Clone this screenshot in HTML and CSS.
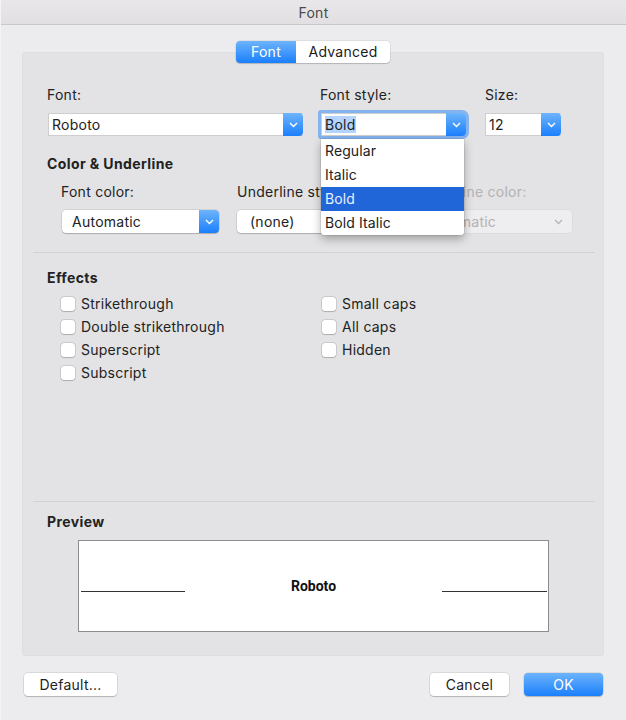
FILE: index.html
```html
<!DOCTYPE html>
<html lang="en">
<head>
  <meta charset="UTF-8" />
  <meta name="viewport" content="width=device-width, initial-scale=1.0"/>
  <title>Font</title>
  <link rel="stylesheet" href="styles.css">
</head>
<body>
  <div class="window">
    <header class="titlebar">Font</header>

    <section class="panel">
      <div class="tabs">
        <span class="tab active">Font</span>
        <span class="tab">Advanced</span>
      </div>

      <div class="font-row">
        <div class="field">
          <label>Font:</label>
          <div class="combo combo-font">
            <span class="combo-text">Roboto</span>
            <span class="arrow-btn"><svg width="9" height="6" viewBox="0 0 9 6"><path d="M1 1l3.5 3.5L8 1" fill="none" stroke="#fff" stroke-width="1.4"/></svg></span>
          </div>
        </div>

        <div class="field">
          <label>Font style:</label>
          <div class="combo combo-style focused">
            <span class="combo-text"><span class="selected-text">Bold</span></span>
            <span class="arrow-btn"><svg width="9" height="6" viewBox="0 0 9 6"><path d="M1 1l3.5 3.5L8 1" fill="none" stroke="#fff" stroke-width="1.4"/></svg></span>
            <ul class="menu">
              <li>Regular</li>
              <li>Italic</li>
              <li class="highlight">Bold</li>
              <li>Bold Italic</li>
            </ul>
          </div>
        </div>

        <div class="field">
          <label>Size:</label>
          <div class="combo combo-size">
            <span class="combo-text">12</span>
            <span class="arrow-btn"><svg width="9" height="6" viewBox="0 0 9 6"><path d="M1 1l3.5 3.5L8 1" fill="none" stroke="#fff" stroke-width="1.4"/></svg></span>
          </div>
        </div>
      </div>

      <h3 class="group-title">Color &amp; Underline</h3>
      <div class="color-row">
        <div class="field">
          <label>Font color:</label>
          <div class="popup popup-color">
            <span class="popup-text">Automatic</span>
            <span class="arrow-btn"><svg width="9" height="6" viewBox="0 0 9 6"><path d="M1 1l3.5 3.5L8 1" fill="none" stroke="#fff" stroke-width="1.4"/></svg></span>
          </div>
        </div>
        <div class="field">
          <label>Underline style:</label>
          <div class="popup popup-underline">
            <span class="popup-text">(none)</span>
            <span class="arrow-btn"><svg width="9" height="6" viewBox="0 0 9 6"><path d="M1 1l3.5 3.5L8 1" fill="none" stroke="#fff" stroke-width="1.4"/></svg></span>
          </div>
        </div>
        <div class="field disabled">
          <label>Underline color:</label>
          <div class="popup popup-disabled">
            <span class="popup-text">Automatic</span>
            <span class="arrow-plain"><svg width="9" height="6" viewBox="0 0 9 6"><path d="M1 1l3.5 3.5L8 1" fill="none" stroke="#b5b4b6" stroke-width="1.3"/></svg></span>
          </div>
        </div>
      </div>

      <hr class="divider">

      <h3 class="group-title">Effects</h3>
      <div class="effects">
        <div class="effects-col left-col">
          <label class="check"><span class="box"></span>Strikethrough</label>
          <label class="check"><span class="box"></span>Double strikethrough</label>
          <label class="check"><span class="box"></span>Superscript</label>
          <label class="check"><span class="box"></span>Subscript</label>
        </div>
        <div class="effects-col">
          <label class="check"><span class="box"></span>Small caps</label>
          <label class="check"><span class="box"></span>All caps</label>
          <label class="check"><span class="box"></span>Hidden</label>
        </div>
      </div>

      <hr class="divider divider-low">

      <h3 class="group-title preview-title">Preview</h3>
      <div class="preview">
        <span class="rule rule-left"></span>
        <span class="sample">Roboto</span>
        <span class="rule rule-right"></span>
      </div>
    </section>

    <footer class="actions">
      <button class="btn">Default...</button>
      <div class="actions-right">
        <button class="btn">Cancel</button>
        <button class="btn btn-primary">OK</button>
      </div>
    </footer>
  </div>
</body>
</html>
```

FILE: styles.css
```css
:root {
  --window-bg: #ecebed;
  --panel-bg: #e3e2e4;
  --text: #222;
  --text-disabled: #b3b2b4;
  --blue-top: #6db4fb;
  --blue-bottom: #1b7ffc;
  --menu-blue: #2066d8;
}

* {
  box-sizing: border-box;
  margin: 0;
  padding: 0;
}

body {
  font-family: Inter, 'Noto Sans', sans-serif;
  font-size: 14px;
  letter-spacing: 0.25px;
  color: var(--text);
  background: var(--window-bg);
}

.window {
  width: 626px;
  height: 720px;
  background: var(--window-bg);
  border-left: 1px solid #f4f3f5;
  overflow: hidden;
}

.titlebar {
  height: 25px;
  padding-top: 1px;
  line-height: 24px;
  text-align: center;
  color: #4a4a4a;
  background: linear-gradient(#e9e7e9, #e1dfe1);
  border-bottom: 1px solid #c9c7c9;
}

/* Main panel */
.panel {
  margin: 27px 0 0 21px;
  width: 582px;
  height: 604px;
  padding: 0 24px;
  background: var(--panel-bg);
  border: 1px solid #dedddf;
  border-radius: 3px;
}

.tabs {
  display: flex;
  width: 154px;
  height: 22px;
  margin: -12px auto 0;
  background: #fff;
  border-radius: 4px;
  box-shadow: 0 0 0 0.5px rgba(0, 0, 0, 0.12), 0 1px 1px rgba(0, 0, 0, 0.15);
  overflow: hidden;
}

.tab {
  line-height: 22px;
  text-align: center;
  color: #1a1a1a;
}

.tab:first-child { width: 60px; }
.tab:last-child { width: 94px; }

.tab.active {
  color: #fff;
  background: linear-gradient(var(--blue-top), var(--blue-bottom));
}

/* Form fields */
.field label {
  display: block;
  line-height: 18px;
  margin-bottom: 9px;
}

.font-row {
  display: grid;
  grid-template-columns: 273px 165px 1fr;
  margin-top: 23px;
}

.combo {
  position: relative;
  display: flex;
  height: 23px;
  background: #fff;
  border: 1px solid #cfcecf;
  border-right: none;
}

.combo-font { width: 255px; margin-left: 1px; }
.combo-style { width: 145px; margin-left: 1px; }
.combo-size { width: 76px; }

.combo-text {
  flex: 1;
  padding-left: 3px;
  line-height: 21px;
}

.combo .arrow-btn {
  margin: -1px 0;
  border-radius: 0 4px 4px 0;
}

.arrow-btn {
  display: flex;
  align-items: center;
  justify-content: center;
  width: 20px;
  background: linear-gradient(var(--blue-top), var(--blue-bottom));
}

.focused {
  box-shadow: 0 0 0 3px #85b3ef;
  border-radius: 1px 4px 4px 1px;
}

.selected-text {
  background: #b4d4fd;
}

/* Font style dropdown */
.menu {
  position: absolute;
  top: 25px;
  left: -1px;
  width: 143px;
  padding: 0;
  list-style: none;
  background: #fff;
  border-radius: 0 0 3px 3px;
  box-shadow: 0 0 0 0.5px rgba(0, 0, 0, 0.15), 0 4px 10px rgba(0, 0, 0, 0.3);
  z-index: 2;
}

.menu li {
  height: 24px;
  line-height: 24px;
  padding-left: 4px;
  letter-spacing: 0.1px;
}

.menu li.highlight {
  background: var(--menu-blue);
  color: #e8f1ff;
}

.group-title {
  font-size: 14px;
  font-weight: 700;
  line-height: 18px;
  letter-spacing: 0.4px;
  margin-top: 19px;
}

.color-row {
  display: grid;
  grid-template-columns: 176px 180px 1fr;
  margin-top: 10px;
  padding-left: 14px;
}

.popup {
  display: flex;
  height: 23px;
  background: #fff;
  border-radius: 4px;
  box-shadow: 0 0 0 0.5px rgba(0, 0, 0, 0.15), 0 1px 1px rgba(0, 0, 0, 0.18);
  overflow: hidden;
}

.popup-color { width: 157px; margin-left: 1px; }
.popup-underline { width: 162px; }
.popup-disabled {
  width: 155px;
  background: #eeedef;
  box-shadow: 0 0 0 0.5px rgba(0, 0, 0, 0.06);
}

.popup-text {
  flex: 1;
  padding-left: 10px;
  line-height: 23px;
}

.popup-underline .popup-text { padding-left: 13px; }

.disabled { color: var(--text-disabled); }

.arrow-plain {
  display: flex;
  align-items: center;
  width: 18px;
}

.divider {
  border: none;
  border-top: 1px solid #d2d1d3;
  margin: 19px -16px 0 -14px;
}

/* Effects checkboxes */
.effects {
  display: flex;
  margin-top: 5px;
  padding-left: 14px;
}

.effects-col {
  display: flex;
  flex-direction: column;
}

.left-col { width: 261px; }

.check {
  display: flex;
  align-items: center;
  gap: 6px;
  height: 23px;
}

.box {
  width: 14px;
  height: 14px;
  background: #fff;
  border-radius: 3px;
  box-shadow: 0 0 0 0.5px rgba(0, 0, 0, 0.2), 0 0.5px 1px rgba(0, 0, 0, 0.15);
}

.divider + .group-title { margin-top: 16px; }

.divider-low { margin-top: 117px; }

.divider-low + .preview-title { margin-top: 11px; }

/* Preview box */
.preview {
  display: flex;
  align-items: center;
  justify-content: space-between;
  width: 471px;
  height: 92px;
  margin: 9px 0 0 31px;
  padding: 0 1px 0 2px;
  background: #fff;
  border: 1px solid #8c8c8c;
}

.rule {
  height: 1px;
  margin-top: 10px;
  background: #333;
}

.rule-left { width: 104px; }
.rule-right { width: 105px; }

.sample {
  font-family: Roboto, sans-serif;
  font-weight: 700;
  font-size: 14px;
  letter-spacing: 0;
  color: #111;
}

/* Bottom buttons */
.actions {
  display: flex;
  justify-content: space-between;
  margin-top: 17px;
  padding: 0 23px;
}

.actions-right {
  display: flex;
  gap: 15px;
}

.btn {
  height: 23px;
  min-width: 79px;
  padding: 0 14px;
  font-family: inherit;
  font-size: 14px;
  letter-spacing: 0.25px;
  color: #222;
  background: #fff;
  border: none;
  border-radius: 4px;
  box-shadow: 0 0 0 0.5px rgba(0, 0, 0, 0.15), 0 1px 1px rgba(0, 0, 0, 0.18);
}

.actions > .btn { width: 93px; }

.btn-primary {
  color: #fff;
  background: linear-gradient(var(--blue-top), var(--blue-bottom));
}
```
